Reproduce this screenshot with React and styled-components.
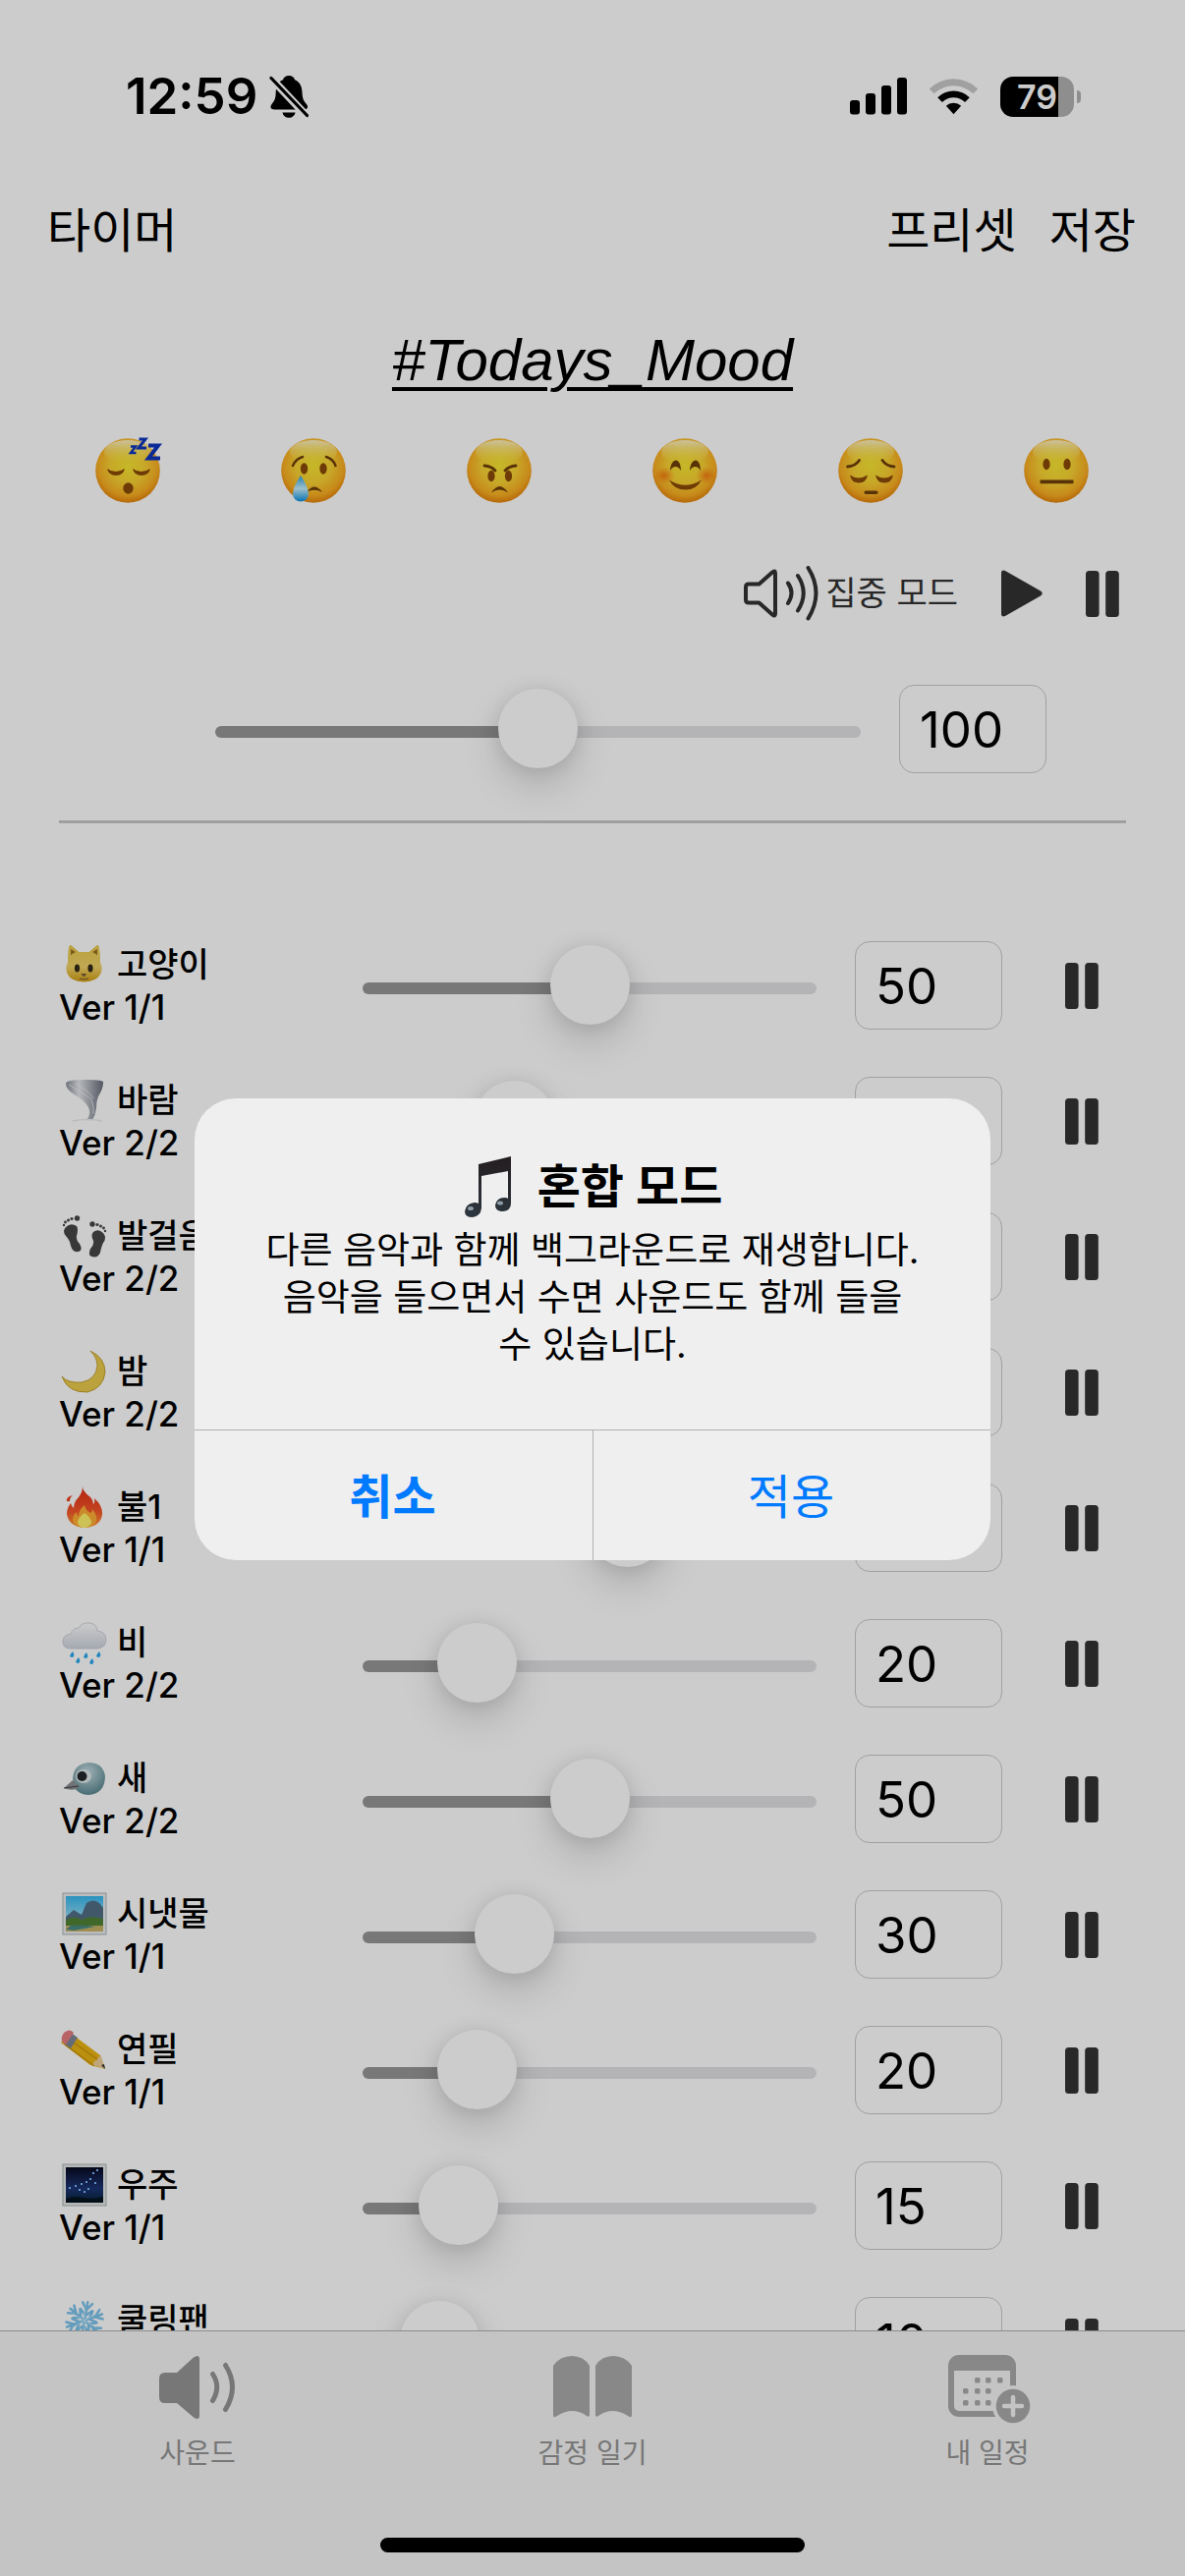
import React, { useState } from "react";
import styled, { createGlobalStyle } from "styled-components";

const GlobalStyle = createGlobalStyle`
  * { box-sizing: border-box; }
  body {
    margin: 0;
    background: #fff;
    color: #000;
    font-family: Inter, "Noto Sans CJK KR", "Liberation Sans", sans-serif;
  }
  button, input { font: inherit; color: inherit; }
`;

const Screen = styled.div`
  position: relative;
  display: flex;
  flex-direction: column;
  height: 100vh;
  overflow: hidden;
`;

const StatusBar = styled.header`
  display: flex;
  flex: none;
  align-items: center;
  justify-content: space-between;
  height: 196px;
  padding: 0 106px 0 128px;
`;

const StatusGroup = styled.div`
  display: flex;
  align-items: center;
  gap: ${(p) => p.$gap}px;
`;

const Clock = styled.time`
  font-size: 51px;
  font-weight: 600;
  line-height: 60px;
`;

const Battery = styled.div`
  display: flex;
  align-items: center;
  gap: 3px;
`;

const BatteryBody = styled.div`
  display: flex;
  align-items: center;
  justify-content: center;
  width: 75px;
  height: 41px;
  border-radius: 13px;
  background: linear-gradient(90deg, #000 79%, #b2b2b2 79%);
  color: #fff;
  font-size: 34px;
  font-weight: 600;
  line-height: 41px;
`;

const BatteryTip = styled.div`
  width: 4px;
  height: 13px;
  border-radius: 0 4px 4px 0;
  background: #b2b2b2;
`;

const PlainButton = styled.button`
  display: flex;
  align-items: center;
  padding: 0;
  border: 0;
  background: none;
`;

const NavBar = styled.nav`
  display: flex;
  flex: none;
  justify-content: space-between;
  height: 78px;
  padding: 0 50px 0 48px;
`;

const NavGroup = styled.div`
  display: flex;
  gap: 33px;
`;

const NavButton = styled(PlainButton)`
  font-size: 48px;
  line-height: 78px;
`;

const Content = styled.main`
  display: flex;
  flex: 1;
  flex-direction: column;
  min-height: 0;
  overflow: hidden;
`;

const Title = styled.h1`
  margin: 57px 0 0;
  font-family: "Liberation Sans", Arial, sans-serif;
  font-size: 60px;
  font-weight: 400;
  font-style: italic;
  line-height: 72px;
  text-align: center;
  text-decoration: underline;
  text-decoration-thickness: 4px;
  text-underline-offset: 7px;
`;

const MoodRow = styled.div`
  display: flex;
  flex: none;
  justify-content: space-between;
  margin-top: 40px;
  padding: 0 95px 0 94px;
`;

const FocusRow = styled.div`
  display: flex;
  flex: none;
  align-items: center;
  justify-content: flex-end;
  gap: 44px;
  height: 60px;
  margin-top: 59px;
  padding-right: 67px;
  color: #333;
`;

const FocusButton = styled(PlainButton)`
  gap: 7px;
  font-size: 34px;
  line-height: 48px;
`;

const MasterRow = styled.div`
  display: flex;
  flex: none;
  align-items: center;
  gap: 39px;
  margin-top: 63px;
  padding: 0 141px 0 219px;
`;

const Divider = styled.hr`
  flex: none;
  height: 3px;
  margin: 48px 60px 96px;
  border: 0;
  background: #c7c7c7;
`;

const Range = styled.input`
  flex: 1;
  min-width: 0;
  width: 100%;
  height: 90px;
  margin: 0;
  appearance: none;
  background: none;

  &::-webkit-slider-runnable-track {
    height: 12px;
    margin-top: 6px;
    border-radius: 6px;
    background: linear-gradient(90deg, #979797 ${(p) => p.$fill}%, #e1e1e4 ${(p) => p.$fill}%);
  }

  &::-webkit-slider-thumb {
    width: 81px;
    height: 81px;
    margin-top: -38px;
    appearance: none;
    border-radius: 50%;
    background: #fff;
    box-shadow: 0 18px 38px rgba(0, 0, 0, 0.15), 0 1px 20px rgba(0, 0, 0, 0.1);
  }
`;

const NumberBox = styled.input`
  width: 150px;
  height: 90px;
  padding: 0 20px;
  border: 1px solid #c8c8c8;
  border-radius: 15px;
  background: #fff;
  font-size: 51px;
  line-height: 60px;
`;

const SoundList = styled.ul`
  flex: none;
  margin: 0;
  padding: 0;
  list-style: none;
`;

const SoundRow = styled.li`
  display: grid;
  grid-template-columns: 270px 1fr 150px 59px;
  align-items: center;
  column-gap: 39px;
  height: 138px;
  padding: 0 88px 0 60px;
`;

const SoundLabel = styled.label`
  display: flex;
  flex-direction: column;
  font-size: 35px;
  font-weight: 500;
  line-height: 43px;
  white-space: nowrap;
`;

const SoundName = styled.span`
  display: flex;
  align-items: center;
  gap: 10px;
  font-size: 34px;
`;

const PauseButton = styled(PlainButton)`
  justify-content: flex-end;
  color: #333;
`;

const TabBar = styled.nav`
  display: flex;
  flex: none;
  flex-direction: column;
  align-items: center;
  justify-content: space-between;
  height: 250px;
  padding: 22px 0 24px;
  border-top: 1px solid #b0b0b0;
  background: #f6f6f6;
`;

const Tabs = styled.div`
  display: grid;
  grid-template-columns: repeat(3, 1fr);
  width: 100%;
`;

const Tab = styled.a`
  display: grid;
  grid-template-rows: 72px 36px;
  justify-items: center;
  gap: 12px;
  color: #959595;
  font-size: 28px;
  line-height: 36px;
  text-decoration: none;
`;

const HomeIndicator = styled.div`
  width: 432px;
  height: 15px;
  border-radius: 8px;
  background: #000;
`;

const Overlay = styled.div`
  position: absolute;
  inset: 0;
  display: flex;
  align-items: center;
  justify-content: center;
  padding: 186px 24px 102px;
  background: rgba(0, 0, 0, 0.2);
`;

const Alert = styled.section`
  width: 810px;
  overflow: hidden;
  border-radius: 42px;
  background: #efefef;
`;

const AlertBody = styled.div`
  display: flex;
  flex-direction: column;
  align-items: center;
  height: 337px;
  padding: 57px 70px 0;
`;

const AlertTitle = styled.h2`
  display: flex;
  align-items: center;
  gap: 26px;
  margin: 0;
  font-size: 48px;
  font-weight: 600;
  line-height: 66px;
`;

const AlertText = styled.p`
  margin: 8px 0 0;
  font-size: 37px;
  line-height: 48px;
  text-align: center;
  word-break: keep-all;
`;

const AlertActions = styled.div`
  display: grid;
  grid-template-columns: 1fr 1fr;
  border-top: 1px solid #b2b2b2;
`;

const AlertButton = styled.button`
  height: 132px;
  padding: 0 2px 4px 0;
  border: 0;
  border-left: ${(p) => (p.$divided ? "1px solid #b2b2b2" : "0")};
  background: none;
  color: #007aff;
  font-size: 48px;
  font-weight: ${(p) => (p.$strong ? 600 : 400)};
`;

function BellOff() {
  return (
    <svg width="40" height="44" viewBox="0 0 40 44" aria-hidden="true">
      <path d="M20 1c3.200 0 5.500 1.800 6 4.200 5 2 7.300 6.600 7.500 12.800.2 6 1.500 8.500 4 11.500 2.800 3.200 1.700 6-2 6H5.500c-4.200 0-5.200-3-2.600-6 3-3.500 3.600-6 3.800-11.500C7 11.600 9.300 7 14 5.200 14.600 2.800 16.800 1 20 1z" />
      <path d="M13.500 38.500h13c-.6 3.200-3 5.300-6.500 5.300s-5.900-2.100-6.500-5.300z" />
      <path d="M0 1.500 40 44" stroke="#fff" strokeWidth="8" />
      <path d="M2 3.500 38.500 41.500" stroke="#000" strokeWidth="3.200" strokeLinecap="round" />
    </svg>
  );
}

function Signal() {
  return (
    <svg width="58" height="38" viewBox="0 0 58 38" aria-hidden="true">
      <rect x="0" y="23" width="10" height="14.500" rx="3" />
      <rect x="16" y="16" width="10" height="21.500" rx="3" />
      <rect x="32" y="8" width="10" height="29.500" rx="3" />
      <rect x="48" y="0" width="10" height="37.500" rx="3" />
    </svg>
  );
}

function Wifi() {
  return (
    <svg width="51" height="38" viewBox="0 0 52 38" aria-hidden="true">
      <path d="M0.800 11.300a36 36 0 0 1 50.400 0l-4.800 5a29.500 29.500 0 0 0-40.800 0z" fill="#c8c8c8" />
      <path d="M9.400 20.200a23.800 23.800 0 0 1 33.200 0l-4.800 4.900a17 17 0 0 0-23.600 0z" />
      <path d="M18.200 29a11.200 11.200 0 0 1 15.600 0L26 37.500z" />
    </svg>
  );
}

function FocusSpeaker() {
  return (
    <svg width="76" height="56" viewBox="0 0 76 56" fill="none" stroke="currentColor" strokeWidth="4" strokeLinecap="round" strokeLinejoin="round" aria-hidden="true">
      <path d="M5 18.500h10.500L29 6.500q3-2.500 3 1v41q0 3.500-3 1l-13.500-12H5q-3 0-3-3v-13q0-3 3-3z" />
      <path d="M45 17.500q7 10 0 20.500M55 10q11.500 17.500 0 35.500M65.500 2q16 25.500 0 51.500" />
    </svg>
  );
}

function Play() {
  return (
    <svg width="42" height="48" viewBox="0 0 42 48" fill="currentColor" aria-hidden="true">
      <path d="M0 3.500Q0-1 4.500 1.200L40 21.500q3.500 2.500 0 5L4.500 46.800Q0 49 0 44.500z" />
    </svg>
  );
}

function Pause() {
  return (
    <svg width="34" height="47" viewBox="0 0 34 47" fill="currentColor" aria-hidden="true">
      <rect width="13.600" height="47" rx="3.500" />
      <rect x="20.200" width="13.600" height="47" rx="3.500" />
    </svg>
  );
}

const faces = {
  sleep: (
    <>
      <g fill="#8a4a08">
        <path d="M15 34q8.500 6 18 0-1.500 7-9 7t-9-7zM41 34q8.500 6 18 0-1.500 7-9 7t-9-7z" />
        <ellipse cx="36.500" cy="54" rx="5.200" ry="5.800" />
      </g>
      <g fill="none" stroke="#0d35bd" strokeLinejoin="miter">
        <path d="M39 11.500h5l-5 6.500h5.500" strokeWidth="2.500" />
        <path d="M47.500 4h6.500l-7 9h8" strokeWidth="3" />
        <path d="M57 10.500h10L57 23.500h12" strokeWidth="4" />
      </g>
    </>
  ),
  cry: (
    <>
      <g fill="none" stroke="#70400a" strokeWidth="2.500" strokeLinecap="round">
        <path d="M15 31Q18 24 25 22M49 22Q56 24 58.500 31" />
      </g>
      <ellipse cx="26.500" cy="34" rx="3.700" ry="5.800" fill="#8a4a08" />
      <ellipse cx="46" cy="34" rx="3.700" ry="5.800" fill="#8a4a08" />
      <path d="M29 58q8-11 16 0-8-4.500-16 0z" fill="#70400a" />
      <path d="M23 41q8 12 8 19a8 7.500 0 0 1-16 0q0-7 8-19z" fill="url(#tearFill)" />
    </>
  ),
  angry: (
    <>
      <g fill="none" stroke="#70400a" strokeWidth="2.800" strokeLinecap="round">
        <path d="M21 31q7 .5 11 5M53 31q-7 .5-11 5" />
      </g>
      <ellipse cx="28" cy="41.500" rx="3.600" ry="5.800" fill="#8a4a08" />
      <ellipse cx="45.500" cy="41.500" rx="3.600" ry="5.800" fill="#8a4a08" />
      <path d="M28 58.500q8.500-13 17 0-8.500-6-17 0z" fill="#70400a" />
    </>
  ),
  happy: (
    <>
      <ellipse cx="15" cy="41" rx="11" ry="9" fill="url(#blushFill)" />
      <ellipse cx="58" cy="41" rx="11" ry="9" fill="url(#blushFill)" />
      <path d="M21 36c1-14 11-14 11 0-3-5.500-8-5.500-11 0zM41 36c1-14 11-14 11 0-3-5.500-8-5.500-11 0z" fill="#70400a" />
      <path d="M20 45.500q16.500 10.500 33 0-5 10-16.500 10T20 45.500z" fill="#8a4a08" />
    </>
  ),
  pensive: (
    <>
      <g fill="none" stroke="#70400a" strokeWidth="2.800" strokeLinecap="round">
        <path d="M12.500 32q8-.5 12-6.500M60 32q-8-.5-12-6.500" />
      </g>
      <path d="M15 40.500q8.500 6 18 0-1.500 8-9 8t-9-8zM41 40.500q8.500 6 18 0-1.500 8-9 8t-9-8z" fill="#8a4a08" />
      <rect x="29.500" y="56.500" width="14" height="3.500" rx="1.700" fill="#70400a" />
    </>
  ),
  neutral: (
    <>
      <ellipse cx="26" cy="29.500" rx="3.600" ry="5.800" fill="#8a4a08" />
      <ellipse cx="47" cy="29.500" rx="3.600" ry="5.800" fill="#8a4a08" />
      <rect x="19.500" y="45.500" width="34" height="3.800" rx="1" fill="#70400a" />
    </>
  ),
};

function Mood({ kind }) {
  return (
    <svg width="72" height="72" viewBox="0 0 72 72" aria-hidden="true">
      <circle cx="36" cy="36" r="32.800" fill="url(#faceFill)" />
      <ellipse cx="36" cy="17" rx="24" ry="12" fill="url(#faceShine)" />
      {faces[kind]}
    </svg>
  );
}

function SharedGradients() {
  return (
    <svg width="0" height="0" style={{ position: "absolute" }} aria-hidden="true">
      <defs>
        <radialGradient id="faceFill" cx="0.5" cy="0.42" r="0.6">
          <stop offset="0" stopColor="#f8e632" />
          <stop offset="0.45" stopColor="#f9d233" />
          <stop offset="0.78" stopColor="#f9ae22" />
          <stop offset="1" stopColor="#e07b08" />
        </radialGradient>
        <linearGradient id="faceShine" x1="0" y1="0" x2="0" y2="1">
          <stop offset="0" stopColor="#fff8d8" stopOpacity="0.9" />
          <stop offset="1" stopColor="#f9e83c" stopOpacity="0" />
        </linearGradient>
        <radialGradient id="blushFill">
          <stop offset="0" stopColor="#f4660a" stopOpacity="0.75" />
          <stop offset="1" stopColor="#f4800a" stopOpacity="0" />
        </radialGradient>
        <linearGradient id="tearFill" x1="0" y1="0" x2="0" y2="1">
          <stop offset="0" stopColor="#2a9fe0" />
          <stop offset="0.5" stopColor="#c6f0ff" />
          <stop offset="1" stopColor="#0b8fe0" />
        </linearGradient>
        <linearGradient id="catFill" x1="0" y1="0" x2="0" y2="1">
          <stop offset="0" stopColor="#e9c84c" />
          <stop offset="0.6" stopColor="#f0d368" />
          <stop offset="1" stopColor="#d19d10" />
        </linearGradient>
        <linearGradient id="windFill">
          <stop offset="0" stopColor="#8a8f99" />
          <stop offset="0.35" stopColor="#e3e5ea" />
          <stop offset="1" stopColor="#686d7a" />
        </linearGradient>
        <linearGradient id="fireFill" x1="0" y1="0" x2="0" y2="1">
          <stop offset="0" stopColor="#e02c14" />
          <stop offset="0.6" stopColor="#f4552a" />
          <stop offset="1" stopColor="#ff9c30" />
        </linearGradient>
        <linearGradient id="cloudFill" x1="0" y1="0" x2="0" y2="1">
          <stop offset="0" stopColor="#ffffff" />
          <stop offset="1" stopColor="#cfd4de" />
        </linearGradient>
        <radialGradient id="birdFill" cx="0.45" cy="0.3" r="0.7">
          <stop offset="0" stopColor="#c5dde2" />
          <stop offset="1" stopColor="#5c8992" />
        </radialGradient>
        <linearGradient id="skyFill" x1="0" y1="0" x2="0" y2="1">
          <stop offset="0" stopColor="#35b8ee" />
          <stop offset="1" stopColor="#d5f2fa" />
        </linearGradient>
        <linearGradient id="spaceFill" x1="0" y1="0" x2="0" y2="1">
          <stop offset="0" stopColor="#070a20" />
          <stop offset="0.6" stopColor="#1c3474" />
          <stop offset="1" stopColor="#062436" />
        </linearGradient>
        <linearGradient id="noteFill" x1="0" y1="0" x2="0" y2="1">
          <stop offset="0" stopColor="#241d20" />
          <stop offset="1" stopColor="#2c363e" />
        </linearGradient>
      </defs>
    </svg>
  );
}

const soundDrawings = {
  cat: (
    <>
      <path d="M9 20Q9 7 10.500 3q1-2 3 0l7 6h10l7-6q2-2 3 0Q42 8 42 20q3 5 .5 11-4 8-17 8.500Q12 39 8.500 31 6 25 9 20z" fill="url(#catFill)" />
      <path d="M12 6v6l5-3zM39 6v6l-5-3z" fill="#9c7220" />
      <ellipse cx="18.500" cy="25.500" rx="2.600" ry="4" fill="#332a18" />
      <ellipse cx="32" cy="25.500" rx="2.600" ry="4" fill="#332a18" />
      <path d="M23 31.500h4.500L25.500 34zM21 36q4.500 1.500 9 0" fill="#7a5d3a" stroke="#7a5d3a" />
      <path d="m5 36 5-1.500M6 40l5-3M45 36l-5-1.500M45 40l-5-3" stroke="#fff" strokeWidth="0.800" />
    </>
  ),
  wind: (
    <>
      <path d="M7 5q0-4 20-4t18 3q0 6-5 14-2 5-2 12-1 7-4 12h-6q4-5 3-10Q29 24 17 17 7 11 7 5z" fill="url(#windFill)" />
      <path d="M10 6q12 7 22 14 4 6 3 16M16 5q12 5 19 15" stroke="#f1f2f5" strokeWidth="1" fill="none" opacity="0.7" />
      <path d="M14 43q14-3 30 0" stroke="#e8eaee" strokeWidth="1.500" fill="none" />
    </>
  ),
  steps: (
    <g fill="#474747">
      <path d="M7 13q5-5 11-1 2 3 0 10-1 4 3 8 4 7-2 8-5 1-7-6-1-6-5-10-4-5 0-9zM45 19q-5-5-10-1-3 3 0 9 1 4-3 8-3 7 2 8 5 2 8-4 1-6 3-10 4-5 0-10z" />
      <circle cx="18.500" cy="4" r="2.700" /><circle cx="13" cy="4.500" r="1.600" /><circle cx="9.500" cy="6" r="1.500" /><circle cx="6.500" cy="8" r="1.400" /><circle cx="5" cy="11" r="1.200" />
      <circle cx="34" cy="10" r="2.700" /><circle cx="39" cy="10.500" r="1.600" /><circle cx="42.500" cy="12" r="1.500" /><circle cx="45.500" cy="14" r="1.400" /><circle cx="47" cy="17" r="1.200" />
    </g>
  ),
  moon: (
    <path d="M32 1q15 7 15 22Q45 39 29 43 9 44 3 27q6 7 20 6 15-3 16-17 0-8-7-15z" fill="#eccb4b" stroke="#b99220" strokeWidth="0.800" />
  ),
  fire: (
    <>
      <path d="M24 1q0 5 8 11 3 3 3 7 2-2 1-6 9 8 8 17-2 12-18 13Q10 42 8 29q0-6 4-11 1 4 3 5 0-6 5-11 4-5 4-11zM14 10q-3 2-3 6-4 1-3-2 1-3 6-4z" fill="url(#fireFill)" />
      <path d="M26 20q1 5 6 8 2-1 2-4 7 9 3 14-3 5-11 5-11-1-12-8 0-5 4-8 0 4 2 4 0-6 6-11z" fill="#ffae35" />
      <path d="M26 28q7 5 7 10-2 5-8 5-6-1-6-6 1-5 7-9z" fill="#fff36b" />
    </>
  ),
  rain: (
    <>
      <path d="M12 28Q4 28 4 21t8-8q2-6 8-6 4-6 11-5 8 1 8 8 9 1 9 9 0 8-9 9z" fill="url(#cloudFill)" stroke="#bcc3cf" strokeWidth="0.700" />
      <g fill="#2aa9ee">
        <path d="M14 31q3 5-.5 6-5-.5.500-6zM28 32q3 5-.5 6-5-.5.500-6zM41 31q3 5-.5 6-5-.5.500-6zM20 37q3 5-.5 6-5-.5.500-6zM34 38q3 5-.5 6-5-.5.500-6z" />
      </g>
    </>
  ),
  bird: (
    <>
      <path d="M14 22Q15 7 31 6q15 1 16 15-1 17-17 18-9 0-14-7z" fill="url(#birdFill)" />
      <path d="m5 32 9-8 7 6-3 3q-7 2-13-1z" fill="#8c9094" />
      <path d="m5 32 15-2" stroke="#404448" strokeWidth="1" />
      <ellipse cx="25" cy="20" rx="8" ry="7" fill="#dfe9ec" />
      <circle cx="23.500" cy="20" r="5" fill="#24282b" />
    </>
  ),
  stream: (
    <>
      <rect x="4" y="1" width="44" height="42" fill="#ececec" stroke="#aab5ba" />
      <rect x="7" y="4" width="38" height="36" fill="url(#skyFill)" />
      <path d="m7 25 8-7 8 5 5-12q7-5 13 0l4 5v18H7z" fill="#526f86" />
      <path d="M7 28q10-5 16 0 9-5 22-1v7H7z" fill="#528236" />
      <path d="M7 34h38v6H7z" fill="#c7b266" />
      <path d="M12 34q14-1 25 1l-22 4-8-1z" fill="#4b8a83" />
    </>
  ),
  pencil: (
    <>
      <path d="m10 4 32 24 5 14-15-4L2 15z" fill="#eab413" />
      <path d="m6 17 30 22M9 11l30 21" stroke="#bc8307" strokeWidth="1" />
      <path d="M35 38q0-5 4-5 0-4 4-4l4 13z" fill="#efcf9c" />
      <path d="m43 38 4 4-1-5z" fill="#35312e" />
      <path d="m12 5 7 5-7 11-7-5z" fill="#7d8797" />
      <path d="M4 15Q1 11 5 5q6-5 10 0L7 17z" fill="#e77c80" />
    </>
  ),
  space: (
    <>
      <rect x="4" y="1" width="44" height="42" fill="#e5e8e8" stroke="#aab5b5" />
      <rect x="7" y="4" width="38" height="36" fill="url(#spaceFill)" />
      <path d="M7 36q8-3 18-1t20-1v6H7z" fill="#04121d" />
      <g fill="#7fb8ff">
        <rect x="38" y="6" width="2" height="2" /><rect x="34" y="9" width="2" height="2" /><rect x="31" y="15" width="2" height="2" /><rect x="27" y="18" width="2" height="2" /><rect x="22" y="20" width="2" height="2" /><rect x="16" y="22" width="2" height="2" /><rect x="10" y="24" width="2" height="2" /><rect x="36" y="19" width="2" height="2" /><rect x="29" y="25" width="2" height="2" /><rect x="20" y="26" width="2" height="2" /><rect x="25" y="28" width="2" height="2" />
      </g>
    </>
  ),
  snow: (
    <g fill="none" stroke="#7cc3ec" strokeWidth="2.500" strokeLinecap="round">
      {[0, 60, 120, 180, 240, 300].map((a) => (
        <path key={a} d="M26 22V3m-5 1 5 7 5-7m-11 7 6 6 6-6" transform={`rotate(${a + 10} 26 22)`} />
      ))}
      <path d="M26 8v28M14 15l24 14M14 29l24-14" stroke="#c1e8fa" strokeWidth="1" />
    </g>
  ),
};

function SoundIcon({ kind }) {
  return (
    <svg width="49" height="44" viewBox="0 0 49 44" aria-hidden="true">
      {soundDrawings[kind]}
    </svg>
  );
}

function MusicNote() {
  return (
    <svg width="50" height="62" viewBox="0 0 50 62" aria-hidden="true">
      <path d="M16 8 49 0v48q0 7-8 8-8 0-8-6 1-8 10-8 2 0 3 1V15l-27 5v33q-1 8-9 9-8 0-8-6 1-8 10-9 2 0 4 1z" fill="url(#noteFill)" />
      <ellipse cx="8" cy="53" rx="3" ry="2" fill="#8f9da8" />
      <ellipse cx="38" cy="47.500" rx="3" ry="2" fill="#8f9da8" />
    </svg>
  );
}

function TabSpeaker() {
  return (
    <svg width="78" height="68" viewBox="0 0 78 68" aria-hidden="true">
      <path d="M6 20h12L35 4.500q6-4 6 2v57q0 6-6 2L18 51H6q-6 0-6-6V26q0-6 6-6z" fill="#959595" />
      <path d="M54.500 21.500q8.500 13 0 27M67.500 12.500q14 22 0 45" fill="none" stroke="#959595" strokeWidth="5" strokeLinecap="round" />
    </svg>
  );
}

function TabBook() {
  return (
    <svg width="80" height="68" viewBox="0 0 80 68" fill="#aaa" aria-hidden="true">
      <path d="M0 13Q7 3 19 3 31 3 37 13v50q0 3-3 1-14-10-30 0-4 3-4-1zM43 13Q49 3 61 3 73 3 80 13v50q0 4-4 1-16-10-30 0-3 2-3-1z" />
    </svg>
  );
}

function TabCalendar() {
  return (
    <svg width="88" height="72" viewBox="-4 0 88 72" aria-hidden="true">
      <rect x="3" y="5" width="63" height="57" rx="8" fill="none" stroke="#aaa" strokeWidth="6" />
      <path d="M3 10q0-6 7-6h49q7 0 7 6v8H3z" fill="#aaa" />
      <g fill="#aaa">
        {[[27, 25], [38, 25], [50, 25], [15, 36], [27, 36], [38, 36], [15, 48], [27, 48], [38, 48]].map(([x, y]) => (
          <rect key={`${x}-${y}`} x={x} y={y} width="5.500" height="5.500" rx="1.500" />
        ))}
      </g>
      <circle cx="66" cy="54" r="21" fill="#f6f6f6" />
      <circle cx="66" cy="54" r="17.300" fill="#aaa" />
      <path d="M57 54h18M66 45v18" stroke="#f6f6f6" strokeWidth="4.500" strokeLinecap="round" />
    </svg>
  );
}

const moods = [
  ["sleep", "졸림"],
  ["cry", "슬픔"],
  ["angry", "화남"],
  ["happy", "행복"],
  ["pensive", "우울"],
  ["neutral", "보통"],
];

const sounds = [
  { id: "cat", name: "고양이", version: "1/1", level: 50 },
  { id: "wind", name: "바람", version: "2/2", level: 30 },
  { id: "steps", name: "발걸음", version: "2/2", level: 30 },
  { id: "moon", name: "밤", version: "2/2", level: 30 },
  { id: "fire", name: "불1", version: "1/1", level: 60 },
  { id: "rain", name: "비", version: "2/2", level: 20 },
  { id: "bird", name: "새", version: "2/2", level: 50 },
  { id: "stream", name: "시냇물", version: "1/1", level: 30 },
  { id: "pencil", name: "연필", version: "1/1", level: 20 },
  { id: "space", name: "우주", version: "1/1", level: 15 },
  { id: "snow", name: "쿨링팬", version: "1/1", level: 10 },
];

function Level({ id, initial, max, label }) {
  const [value, setValue] = useState(initial);
  const change = (e) => setValue(Number(e.target.value) || 0);
  return (
    <>
      <Range id={id} type="range" min="0" max={max} value={value} onChange={change} $fill={(value / max) * 100} aria-label={label} />
      <NumberBox type="text" inputMode="numeric" value={value} onChange={change} aria-label={`${label} 값`} />
    </>
  );
}

export default function App() {
  const [open, setOpen] = useState(true);
  return (
    <Screen>
      <GlobalStyle />
      <SharedGradients />
      <StatusBar>
        <StatusGroup $gap={12}>
          <Clock>12:59</Clock>
          <BellOff />
        </StatusGroup>
        <StatusGroup $gap={22}>
          <Signal />
          <Wifi />
          <Battery>
            <BatteryBody>79</BatteryBody>
            <BatteryTip />
          </Battery>
        </StatusGroup>
      </StatusBar>
      <NavBar>
        <NavButton>타이머</NavButton>
        <NavGroup>
          <NavButton>프리셋</NavButton>
          <NavButton>저장</NavButton>
        </NavGroup>
      </NavBar>
      <Content>
        <Title>#Todays_Mood</Title>
        <MoodRow>
          {moods.map(([kind, label]) => (
            <PlainButton key={kind} aria-label={label}>
              <Mood kind={kind} />
            </PlainButton>
          ))}
        </MoodRow>
        <FocusRow>
          <FocusButton>
            <FocusSpeaker />
            집중 모드
          </FocusButton>
          <PlainButton aria-label="재생">
            <Play />
          </PlainButton>
          <PlainButton aria-label="일시 정지">
            <Pause />
          </PlainButton>
        </FocusRow>
        <MasterRow>
          <Level id="master" initial={100} max={200} label="전체 음량" />
        </MasterRow>
        <Divider />
        <SoundList>
          {sounds.map((s) => (
            <SoundRow key={s.id}>
              <SoundLabel htmlFor={s.id}>
                <SoundName>
                  <SoundIcon kind={s.id} />
                  {s.name}
                </SoundName>
                <span>Ver {s.version}</span>
              </SoundLabel>
              <Level id={s.id} initial={s.level} max={100} label={s.name} />
              <PauseButton aria-label={`${s.name} 일시 정지`}>
                <Pause />
              </PauseButton>
            </SoundRow>
          ))}
        </SoundList>
      </Content>
      <TabBar>
        <Tabs>
          <Tab href="#sound">
            <TabSpeaker />
            <span>사운드</span>
          </Tab>
          <Tab href="#diary">
            <TabBook />
            <span>감정 일기</span>
          </Tab>
          <Tab href="#schedule">
            <TabCalendar />
            <span>내 일정</span>
          </Tab>
        </Tabs>
        <HomeIndicator />
      </TabBar>
      {open && (
        <Overlay>
          <Alert role="alertdialog" aria-modal="true" aria-labelledby="alert-title" aria-describedby="alert-text">
            <AlertBody>
              <AlertTitle id="alert-title">
                <MusicNote />
                혼합 모드
              </AlertTitle>
              <AlertText id="alert-text">
                다른 음악과 함께 백그라운드로 재생합니다. 음악을 들으면서 수면 사운드도 함께 들을 수 있습니다.
              </AlertText>
            </AlertBody>
            <AlertActions>
              <AlertButton $strong onClick={() => setOpen(false)}>취소</AlertButton>
              <AlertButton $divided onClick={() => setOpen(false)}>적용</AlertButton>
            </AlertActions>
          </Alert>
        </Overlay>
      )}
    </Screen>
  );
}
